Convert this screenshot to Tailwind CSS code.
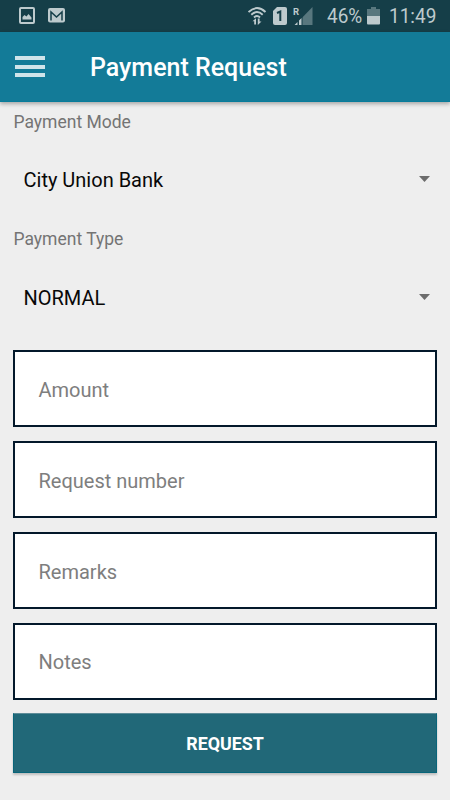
<!DOCTYPE html>
<html lang="en">
<head>
<meta charset="utf-8">
<title>Payment Request</title>
<script src="https://cdn.jsdelivr.net/npm/@tailwindcss/browser@4"></script>
</head>
<body class="w-[450px] h-[800px] overflow-hidden bg-[#eeeeee] font-['Roboto',sans-serif] flex flex-col">
  <div class="h-[31.500px] shrink-0 bg-[#153e48] flex items-center text-[#bdcacd] pl-[19px] pr-[13px]">
    <svg class="w-4 h-[17px]" viewBox="0 0 16 17"><rect x="1" y="1" width="14" height="15" rx="1" fill="none" stroke="#bdcacd" stroke-width="2"/><path d="M3.500 12.500V10l2-2 2 1.500 2-2.500 3 3.500v2z" fill="#bdcacd"/></svg>
    <svg class="w-[17px] h-[15px] ml-[13px]" viewBox="0 0 17 15"><rect width="17" height="14.500" rx="2" fill="#bdcacd"/><path d="M3 12.500V4l5.500 5L14 4v8.500" fill="none" stroke="#153e48" stroke-width="1.500"/></svg>
    <div class="grow"></div>
    <svg class="w-[19px] h-5" viewBox="0 0 19 20"><g fill="none" stroke="#bdcacd" stroke-width="1.900"><path d="M.5 6Q9-1.800 17.500 6"/><path d="M3.300 8.800Q9 3.300 14.700 8.800"/><path d="M6 11.500Q9 8.500 12 11.500"/></g><path d="M6.200 18.500v-3.300H4.500L8 12.200v6.300zM9.800 12.500h1.800v3h1.900L9.800 19z" fill="#bdcacd"/></svg>
    <svg class="w-[14px] h-[18px] ml-[6px]" viewBox="0 0 14 18"><path d="M4 0H12q2 0 2 2v14q0 2-2 2H2q-2 0-2-2V4z" fill="#bdcacd"/><path d="M4 6L7.300 4.500V14" fill="none" stroke="#153e48" stroke-width="2"/></svg>
    <svg class="w-5 h-5 ml-[6px]" viewBox="0 0 20 20"><path d="M19.500 1v18H2z" fill="#58777e"/><path d="M0 20V10h9.500v10z" fill="#153e48"/><path d="M1.500 19L4.500 16V19zM6 14.500L8.500 12V19H6z" fill="#bdcacd"/><text x="0" y="8.500" font-size="9.500" font-weight="700" fill="#bdcacd">R</text></svg>
    <span class="text-[20px] leading-8 w-[37px] ml-[14px] pt-px whitespace-nowrap"><span class="inline-block origin-left scale-x-[.95]">46%</span></span>
    <svg class="w-[13px] h-[18px] ml-[3px]" viewBox="0 0 13 18"><path d="M4 0h5v2h4v7H0V2h4z" fill="#58777e"/><path d="M0 9h13v7.500q0 1-1 1H1q-1 0-1-1z" fill="#bdcacd"/></svg>
    <span class="text-[20px] leading-8 ml-[9px] w-[48px] pt-px whitespace-nowrap"><span class="inline-block origin-left scale-x-[.95]">11:49</span></span>
  </div>
  <header class="h-[70px] shrink-0 bg-[#137b98] border-b border-[#087c9b] shadow-[0_2px_4px_rgba(0,0,0,.3)] flex items-center pl-[15px]">
    <div class="w-[30px] mt-px flex flex-col gap-[4.500px]">
      <div class="h-[4px] bg-[#cfe4ea]"></div><div class="h-[4px] bg-[#cfe4ea]"></div><div class="h-[4px] bg-[#cfe4ea]"></div>
    </div>
    <h1 class="ml-[45px] mt-[3px] text-[25px] leading-8 font-medium text-white whitespace-nowrap">Payment Request</h1>
  </header>
  <main class="px-[13px] flex flex-col">
    <label class="mt-[9.500px] h-[22px] leading-[22px] pl-[.5px] text-[17.500px] text-[#747474]">Payment Mode</label>
    <div class="mt-[35px] h-[22px] pl-[10.500px] pr-[7px] flex items-center justify-between text-[20px] text-[#080808]"><span class="pt-px">City Union Bank</span><svg class="w-[11px] h-[6px]" viewBox="0 0 11 6"><path d="M0 0h11L5.500 6z" fill="#6c6c6c"/></svg></div>
    <label class="mt-[38px] h-[22px] leading-[22px] pl-[.5px] text-[17.500px] text-[#747474]">Payment Type</label>
    <div class="mt-[36px] h-[22px] pl-[10.500px] pr-[7px] flex items-center justify-between text-[20px] text-[#080808]"><span class="pt-px">NORMAL</span><svg class="w-[11px] h-[6px]" viewBox="0 0 11 6"><path d="M0 0h11L5.500 6z" fill="#6c6c6c"/></svg></div>
    <div class="mt-[42px] flex flex-col gap-[14px] text-[20px] text-[#7e7e7e]">
      <div class="h-[77px] border-2 border-[#03182a] bg-white flex items-center pl-[23.500px] pt-[2px]">Amount</div>
      <div class="h-[77px] border-2 border-[#03182a] bg-white flex items-center pl-[23.500px] pt-[2px]">Request number</div>
      <div class="h-[77px] border-2 border-[#03182a] bg-white flex items-center pl-[23.500px] pt-[2px]">Remarks</div>
      <div class="h-[77px] border-2 border-[#03182a] bg-white flex items-center pl-[23.500px] pt-[1px]">Notes</div>
    </div>
    <button class="mt-[13px] h-[60px] pt-[2px] bg-[#216878] border border-[#08657a] border-t-[#5d8c98] shadow-[0_2px_2px_rgba(0,0,0,.2)] text-white font-bold text-[17.500px]"><span class="inline-block scale-x-[1.020]">REQUEST</span></button>
  </main>
</body>
</html>
